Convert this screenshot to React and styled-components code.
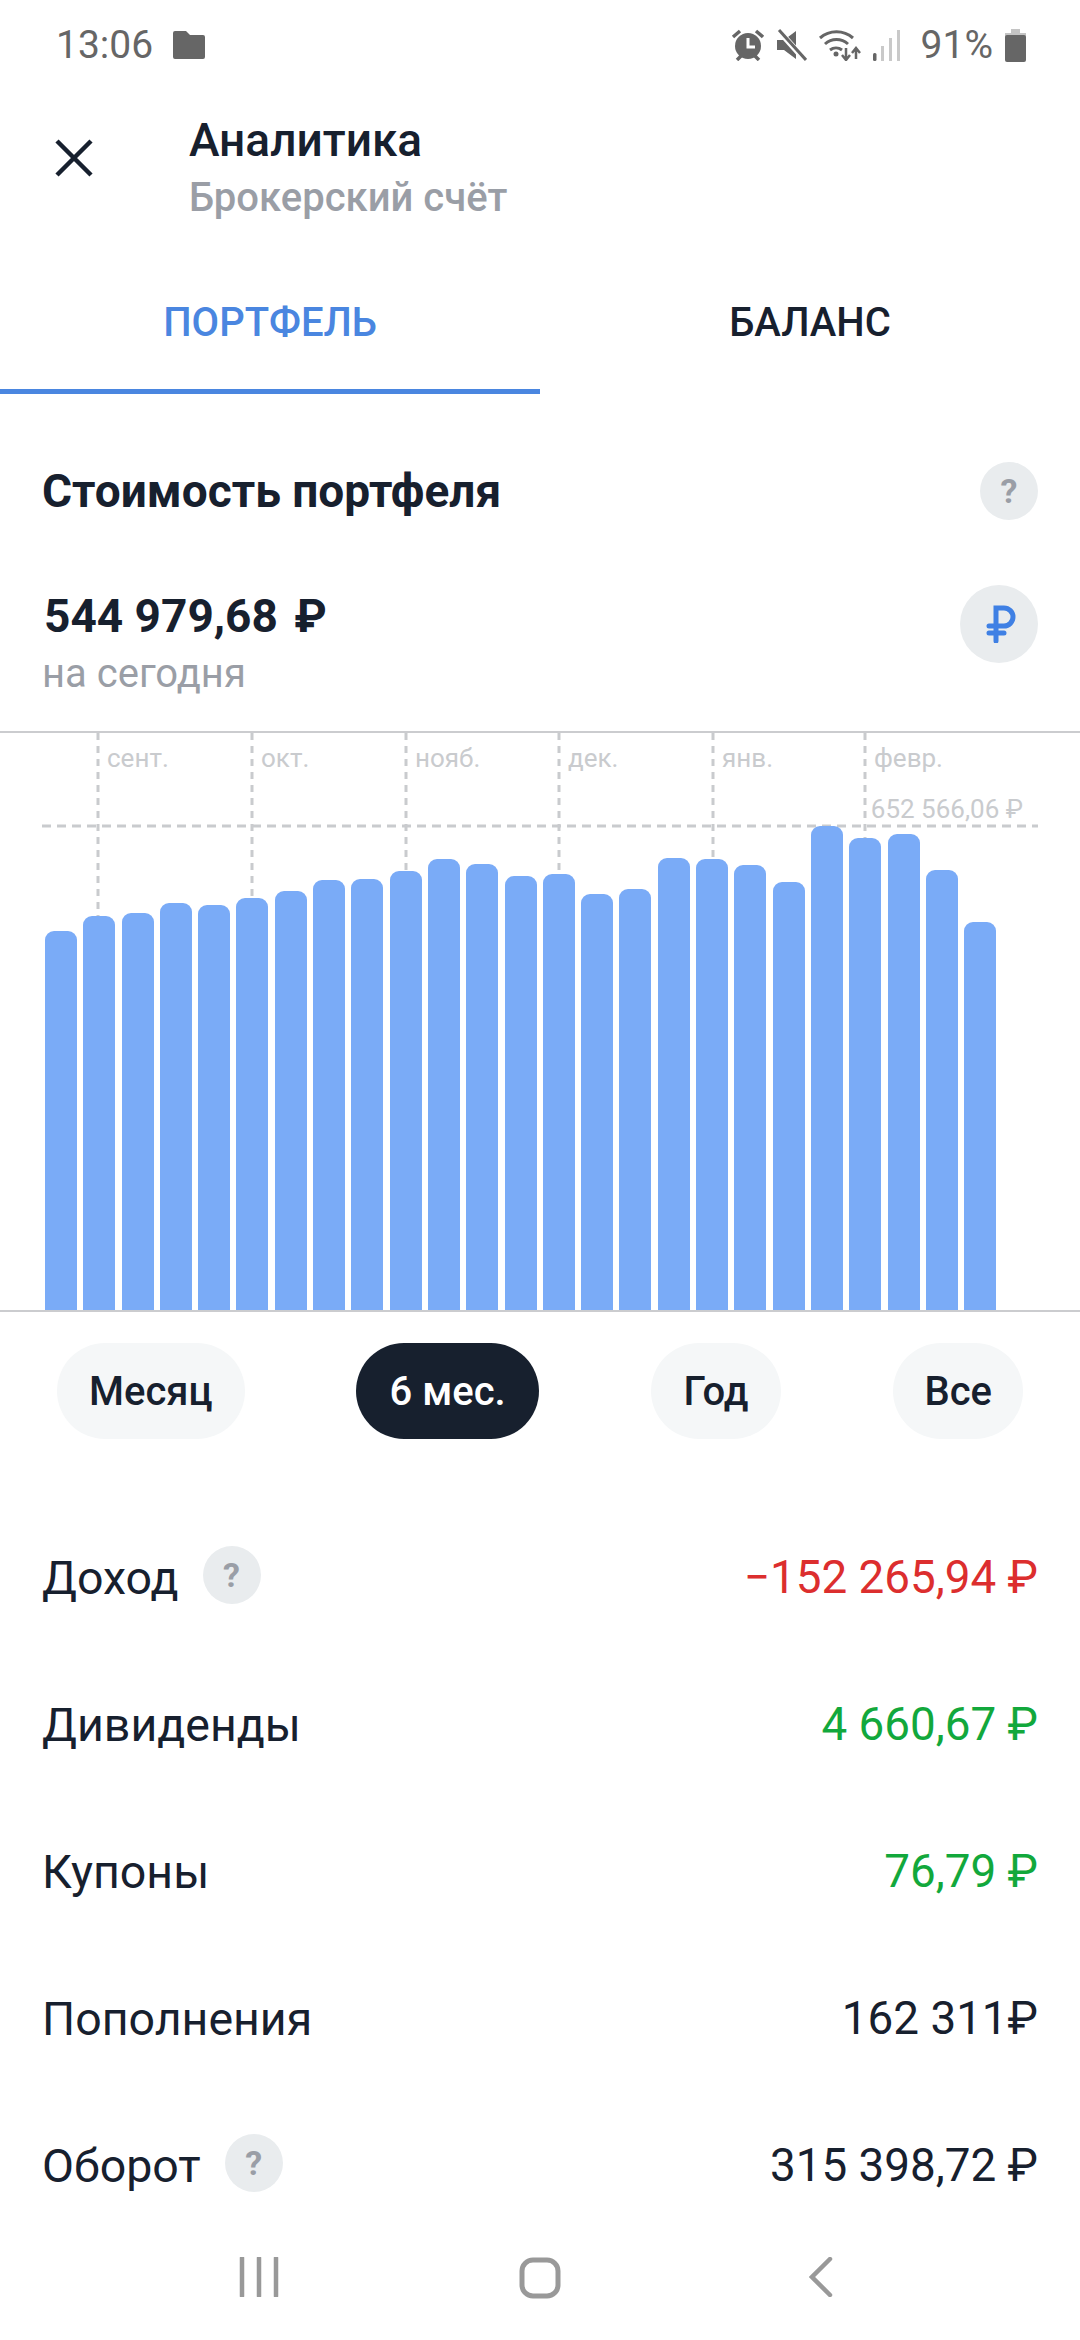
import React from 'react'
import styled, { createGlobalStyle } from 'styled-components'

const GlobalStyle = createGlobalStyle`
  html, body {
    margin: 0;
    padding: 0;
    background: #fff;
    font-family: Roboto, "Liberation Sans", sans-serif;
  }
`

const Screen = styled.div`
  width: 1080px;
  height: 2340px;
  overflow: hidden;
  background: #fff;
  color: #17202e;
`

const StatusBar = styled.div`
  height: 90px;
  padding: 0 54px 0 56px;
  box-sizing: border-box;
  display: flex;
  align-items: center;
  color: #666;
  font-size: 39px;
`
const StatusTime = styled.span`
  margin-right: 20px;
`
const StatusIcons = styled.div`
  margin-left: auto;
  display: flex;
  align-items: center;
  gap: 12px;
`
const StatusPercent = styled.span`
  margin: 0 0 0 8px;
`

const Header = styled.div`
  height: 160px;
  display: flex;
  align-items: flex-start;
  box-sizing: border-box;
  padding: 22px 0 0 54px;
`
const CloseButton = styled.div`
  width: 40px;
  height: 40px;
  margin: 26px 95px 0 0;
`
const HeaderTitle = styled.div`
  font-size: 46px;
  font-weight: 500;
  line-height: 57px;
`
const HeaderSubtitle = styled.div`
  font-size: 40px;
  font-weight: 500;
  line-height: 57px;
  color: #9a9ea6;
`

const Tabs = styled.div`
  height: 144px;
  display: flex;
`
const Tab = styled.div`
  flex: 1;
  display: flex;
  align-items: center;
  justify-content: center;
  box-sizing: border-box;
  padding-top: 6px;
  font-size: 40px;
  font-weight: 500;
  color: ${p => (p.$active ? '#4a86e0' : '#17202e')};
  border-bottom: 5px solid ${p => (p.$active ? '#4a86e0' : 'transparent')};
`

const Summary = styled.div`
  height: 337px;
  box-sizing: border-box;
  padding: 67px 42px 0 42px;
`
const SummaryHead = styled.div`
  height: 60px;
  display: flex;
  align-items: center;
  justify-content: space-between;
`
const SectionTitle = styled.div`
  font-size: 46px;
  font-weight: 700;
`
const Hint = styled.div`
  width: 58px;
  height: 58px;
  border-radius: 50%;
  background: #e9ecee;
  color: #9a9ea6;
  display: flex;
  align-items: center;
  justify-content: center;
  font-size: 34px;
  font-weight: 700;
  flex: none;
`
const SummaryValue = styled.div`
  margin-top: 66px;
  display: flex;
  justify-content: space-between;
  align-items: flex-start;
`
const Amount = styled.div`
  padding-left: 2px;
  font-size: 46px;
  font-weight: 700;
  line-height: 58px;
`
const AmountCurrency = styled.span`
  margin-left: 5px;
`
const AmountNote = styled.div`
  font-size: 40px;
  line-height: 58px;
  color: #9a9ea6;
`
const CurrencyButton = styled.div`
  width: 78px;
  height: 78px;
  margin-top: -2px;
  border-radius: 50%;
  background: #e9ecee;
  display: flex;
  align-items: center;
  justify-content: center;
`

const Chart = styled.div`
  position: relative;
  height: 581px;
  box-sizing: border-box;
  border-top: 2px solid #cbcccf;
  border-bottom: 2px solid #cbcccf;
`
const GridLines = styled.svg`
  position: absolute;
  left: 0;
  top: 0;
  width: 1080px;
  height: 577px;
`
const Bars = styled.div`
  position: absolute;
  left: 45px;
  bottom: 0;
  display: flex;
  align-items: flex-end;
  gap: 6.3px;
`
const Bar = styled.div`
  width: 32px;
  background: #7aabf7;
  border-radius: 9px 9px 0 0;
`
const MonthLabel = styled.span`
  position: absolute;
  top: 10px;
  font-size: 26px;
  line-height: 30px;
  color: #c9cbce;
`
const MaxLabel = styled.span`
  position: absolute;
  top: 60px;
  right: 57px;
  font-size: 26px;
  line-height: 32px;
  color: #c9cbce;
`

const Ranges = styled.div`
  padding: 31px 57px 0;
  display: flex;
  justify-content: space-between;
`
const RangePill = styled.div`
  height: 96px;
  padding: 0 ${p => p.$pad}px;
  border-radius: 48px;
  display: flex;
  align-items: center;
  font-size: 40px;
  font-weight: 500;
  background: ${p => (p.$active ? '#17202e' : '#f5f7f8')};
  color: ${p => (p.$active ? '#fff' : '#17202e')};
`

const Rows = styled.div`
  margin-top: 65px;
`
const Row = styled.div`
  height: 147px;
  padding: 0 42px 0 42px;
  display: flex;
  align-items: center;
  font-size: 46.5px;
`
const RowHint = styled(Hint)`
  margin: -6px 0 0 24px;
`
const RowValue = styled.span`
  margin-left: auto;
  font-size: 45.8px;
  color: ${p => p.$color || '#17202e'};
`

const NavBar = styled.div`
  height: 101px;
  display: flex;
  align-items: flex-start;
  padding: 18px 118px 0;
  box-sizing: border-box;
`
const NavSlot = styled.div`
  flex: 1;
  display: flex;
  justify-content: center;
`

const barTops = [931, 916, 913, 903, 905, 898, 891, 880, 879, 871, 859, 864, 876, 874, 894, 889, 858, 859, 865, 882, 826, 838, 834, 870, 922]
const months = [
  { name: 'сент.', x: 98 },
  { name: 'окт.', x: 252 },
  { name: 'нояб.', x: 406 },
  { name: 'дек.', x: 559 },
  { name: 'янв.', x: 713 },
  { name: 'февр.', x: 865 },
]
const ranges = [
  { label: 'Месяц', pad: 32 },
  { label: '6 мес.', pad: 33, active: true },
  { label: 'Год', pad: 33 },
  { label: 'Все', pad: 31 },
]
const rows = [
  { label: 'Доход', hint: true, value: '−152 265,94 ₽', color: '#dc2e2e' },
  { label: 'Дивиденды', value: '4 660,67 ₽', color: '#12a83c' },
  { label: 'Купоны', value: '76,79 ₽', color: '#12a83c' },
  { label: 'Пополнения', value: '162 311₽' },
  { label: 'Оборот', hint: true, value: '315 398,72 ₽' },
]

const FolderIcon = () => (
  <svg width="32" height="28" viewBox="0 0 32 28">
    <path d="M2 0h11l4 4h13a2 2 0 0 1 2 2v20a2 2 0 0 1-2 2H2a2 2 0 0 1-2-2V2a2 2 0 0 1 2-2z" fill="#666" />
  </svg>
)
const AlarmIcon = () => (
  <svg width="34" height="32" viewBox="0 0 34 32">
    <circle cx="17" cy="17" r="13" fill="#666" />
    <path d="M17 9v9h7" fill="none" stroke="#fff" strokeWidth="3" />
    <path d="M2 8l7-6M32 8l-7-6M6 31l4-4M28 31l-4-4" stroke="#666" strokeWidth="3.5" />
  </svg>
)
const MuteIcon = () => (
  <svg width="30" height="32" viewBox="0 0 30 32">
    <path d="M0 11h7l12-9v28l-12-9H0z" fill="#666" />
    <path d="M1 1l27 30" stroke="#fff" strokeWidth="6" />
    <path d="M2 1l27 30" stroke="#666" strokeWidth="3" />
  </svg>
)
const WifiIcon = () => (
  <svg width="42" height="32" viewBox="0 0 42 32">
    <path d="M1 9a25 25 0 0 1 33 0M6 15a17 17 0 0 1 23 0M11 21a10 10 0 0 1 12 0" fill="none" stroke="#666" strokeWidth="3" />
    <circle cx="17" cy="25" r="2.5" fill="#666" />
    <path d="M27 19v11M23 26l4 5 4-5M37 30V19M33 24l4-5 4 5" fill="none" stroke="#666" strokeWidth="2.5" />
  </svg>
)
const SignalIcon = () => (
  <svg width="28" height="31" viewBox="0 0 28 31">
    <rect x="0" y="23" width="3.5" height="8" rx="1.5" fill="#666" />
    <rect x="8" y="16" width="3" height="15" fill="#c9c9c9" />
    <rect x="16" y="8" width="3" height="23" fill="#c9c9c9" />
    <rect x="24" y="0" width="3" height="31" fill="#c9c9c9" />
  </svg>
)
const BatteryIcon = () => (
  <svg width="21" height="33" viewBox="0 0 21 33">
    <rect x="6" y="0" width="9" height="5" fill="#c4c4c4" />
    <rect x="0" y="4" width="21" height="4" fill="#c4c4c4" />
    <rect x="0" y="6" width="21" height="27" rx="2" fill="#666" />
  </svg>
)
const CloseIcon = () => (
  <svg width="40" height="40" viewBox="0 0 40 40">
    <path d="M3 3l34 34M37 3L3 37" stroke="#17202e" strokeWidth="4.5" />
  </svg>
)
const RubleIcon = () => (
  <svg width="34" height="38" viewBox="-4 0 34 38">
    <path d="M10 36V3h8a9 9 0 0 1 0 18H3M3 28h15" fill="none" stroke="#3f80e4" strokeWidth="5" strokeLinecap="round" />
  </svg>
)
const RecentsIcon = () => (
  <svg width="40" height="40" viewBox="0 0 40 40">
    <path d="M3 1v38M20 1v38M37 1v38" stroke="#999" strokeWidth="4.5" strokeLinecap="round" />
  </svg>
)
const HomeIcon = () => (
  <svg width="42" height="42" viewBox="0 0 42 42">
    <rect x="3" y="3" width="36" height="36" rx="11" fill="none" stroke="#999" strokeWidth="5" />
  </svg>
)
const BackIcon = () => (
  <svg width="24" height="40" viewBox="0 0 24 40">
    <path d="M21 2L3 20l18 18" fill="none" stroke="#999" strokeWidth="4.5" strokeLinecap="round" />
  </svg>
)

export default function App() {
  return (
    <Screen>
      <GlobalStyle />
      <StatusBar>
        <StatusTime>13:06</StatusTime>
        <FolderIcon />
        <StatusIcons>
          <AlarmIcon />
          <MuteIcon />
          <WifiIcon />
          <SignalIcon />
          <StatusPercent>91%</StatusPercent>
          <BatteryIcon />
        </StatusIcons>
      </StatusBar>

      <Header>
        <CloseButton><CloseIcon /></CloseButton>
        <div>
          <HeaderTitle>Аналитика</HeaderTitle>
          <HeaderSubtitle>Брокерский счёт</HeaderSubtitle>
        </div>
      </Header>

      <Tabs>
        <Tab $active>ПОРТФЕЛЬ</Tab>
        <Tab>БАЛАНС</Tab>
      </Tabs>

      <Summary>
        <SummaryHead>
          <SectionTitle>Стоимость портфеля</SectionTitle>
          <Hint>?</Hint>
        </SummaryHead>
        <SummaryValue>
          <div>
            <Amount>544 979,68 <AmountCurrency>₽</AmountCurrency></Amount>
            <AmountNote>на сегодня</AmountNote>
          </div>
          <CurrencyButton><RubleIcon /></CurrencyButton>
        </SummaryValue>
      </Summary>

      <Chart>
        <GridLines viewBox="0 0 1080 577">
          {months.map(m => (
            <line key={m.name} x1={m.x} x2={m.x} y1="0" y2="300" stroke="#c9cbce" strokeWidth="3" strokeDasharray="7 6" />
          ))}
          <line x1="42" x2="1038" y1="93" y2="93" stroke="#c9cbce" strokeWidth="3" strokeDasharray="9 6" />
        </GridLines>
        {months.map(m => (
          <MonthLabel key={m.name} style={{ left: m.x + 9 }}>{m.name}</MonthLabel>
        ))}
        <MaxLabel>652 566,06 ₽</MaxLabel>
        <Bars>
          {barTops.map((top, i) => (
            <Bar key={i} style={{ height: 1310 - top }} />
          ))}
        </Bars>
      </Chart>

      <Ranges>
        {ranges.map(r => (
          <RangePill key={r.label} $pad={r.pad} $active={r.active}>{r.label}</RangePill>
        ))}
      </Ranges>

      <Rows>
        {rows.map(r => (
          <Row key={r.label}>
            {r.label}
            {r.hint && <RowHint>?</RowHint>}
            <RowValue $color={r.color}>{r.value}</RowValue>
          </Row>
        ))}
      </Rows>

      <NavBar>
        <NavSlot><RecentsIcon /></NavSlot>
        <NavSlot><HomeIcon /></NavSlot>
        <NavSlot><BackIcon /></NavSlot>
      </NavBar>
    </Screen>
  )
}
